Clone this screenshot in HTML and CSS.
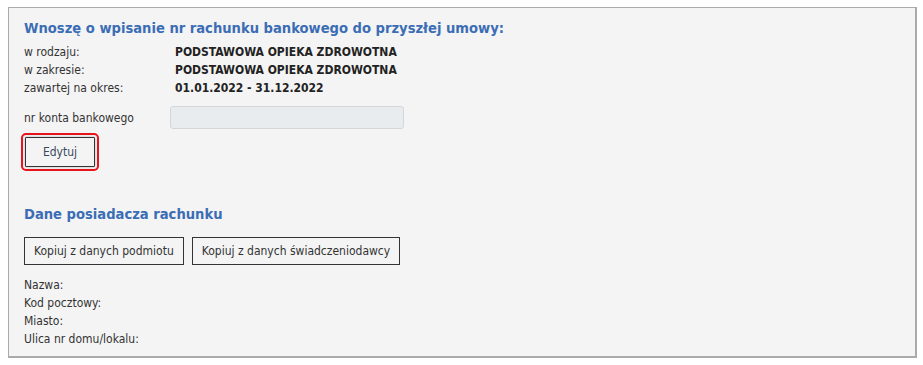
FILE: index.html
```html
<!DOCTYPE html>
<html lang="pl">
<head>
    <meta charset="UTF-8">
    <title>Rachunek bankowy</title>
    <link rel="stylesheet" href="styles.css">
</head>
<body>
    <div class="panel">
        <h2 class="section-title">Wnoszę o wpisanie nr rachunku bankowego do przyszłej umowy:</h2>
        <div class="info">
            <div class="info-label">w rodzaju:</div>
            <div class="info-value">PODSTAWOWA OPIEKA ZDROWOTNA</div>
            <div class="info-label">w zakresie:</div>
            <div class="info-value">PODSTAWOWA OPIEKA ZDROWOTNA</div>
            <div class="info-label">zawartej na okres:</div>
            <div class="info-value">01.01.2022 - 31.12.2022</div>
        </div>

        <div class="account-row">
            <label class="account-label" for="account">nr konta bankowego</label>
            <input type="text" id="account" class="account-input" disabled>
        </div>

        <div class="edit-row">
            <button type="button" class="btn btn-focus">Edytuj</button>
        </div>

        <h2 class="section-title owner-title">Dane posiadacza rachunku</h2>
        <div class="copy-buttons">
            <button type="button" class="btn">Kopiuj z danych podmiotu</button>
            <button type="button" class="btn">Kopiuj z danych świadczeniodawcy</button>
        </div>

        <div class="owner-fields">
            <div>Nazwa:</div>
            <div>Kod pocztowy:</div>
            <div>Miasto:</div>
            <div>Ulica nr domu/lokalu:</div>
        </div>
    </div>
</body>
</html>
```

FILE: styles.css
```css
* { margin: 0; padding: 0; box-sizing: border-box; }
body { font-family: "DejaVu Sans Condensed", "DejaVu Sans", sans-serif; font-stretch: semi-condensed; font-size: 12px; color: #333; background: white; padding: 7px 6px 0 8px; }
.panel { background: #f4f4f4; border: 1px solid #aaa; border-bottom-width: 2px; border-right-width: 2px; padding: 10px 15px 12px 15px; height: 351px; }
.section-title { font-size: 14.6px; font-weight: bold; color: #3b6db4; line-height: 20px; }
.info { display: grid; grid-template-columns: 151px 1fr; line-height: 18px; margin-top: 5px; }
.info-value { font-weight: bold; color: #222; }
.account-row { display: flex; align-items: center; margin-top: 9px; }
.account-label { width: 146px; }
.account-input { width: 234px; height: 23px; background: #e9ecef; border: 1px solid #d4d6da; border-radius: 3px; }
.edit-row { margin-top: 8px; padding-left: 1px; }
.btn { font-family: inherit; font-stretch: inherit; font-size: 12px; color: #333; background: #f4f4f4; border: 1px solid #333; padding: 0 9px; height: 28px; cursor: pointer; }
.btn-focus { width: 70px; height: 30px; padding: 0; color: #3a4a5c; outline: 2px solid #e8141c; outline-offset: 2px; border-radius: 1px; box-shadow: 0 0 3px rgba(0,0,0,0.25); }
.owner-title { margin-top: 37px; }
.copy-buttons { display: flex; gap: 8px; margin-top: 13px; }
.owner-fields { line-height: 18px; margin-top: 11px; }
```
